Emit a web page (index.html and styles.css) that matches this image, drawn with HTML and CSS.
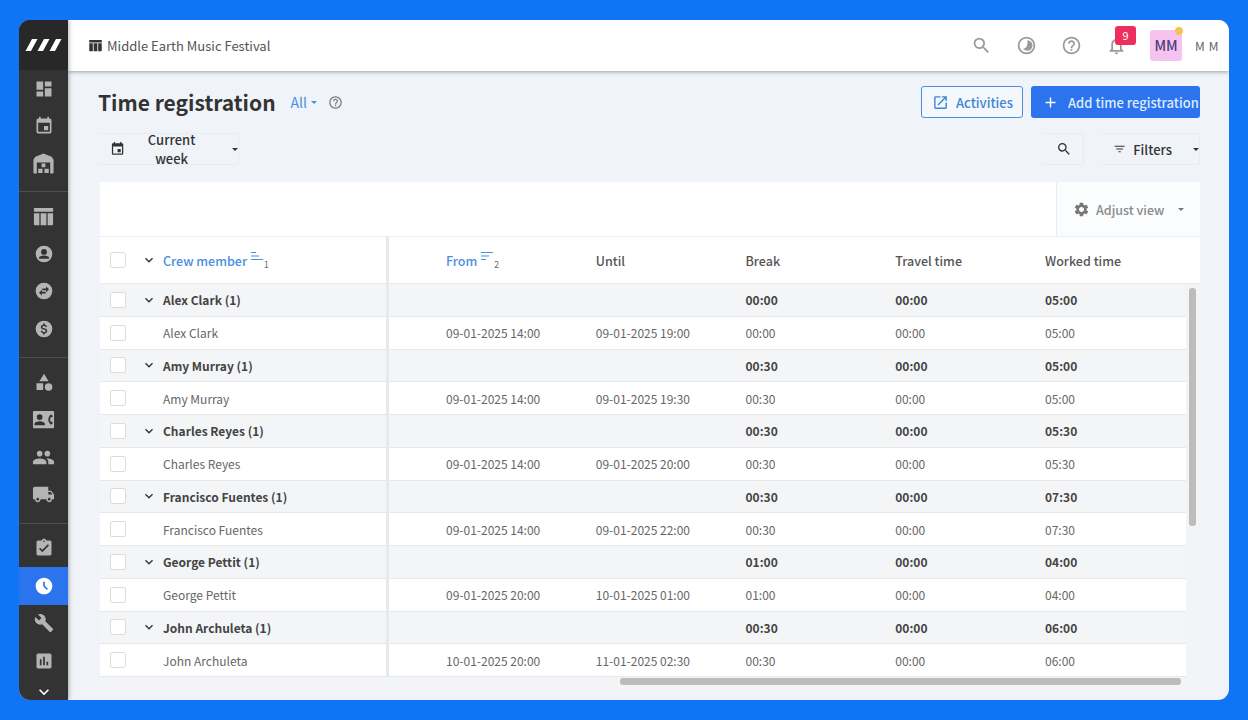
FILE: index.html
```html
<!DOCTYPE html>
<html lang="en">
<head>
<meta charset="utf-8">
<title>Time registration</title>
<link rel="stylesheet" href="styles.css">
</head>
<body>
<svg class="defs" width="0" height="0" aria-hidden="true">
  <symbol id="i-dashboard" viewBox="0 0 24 24"><path d="M3 13h8V3H3v10zm0 8h8v-6H3v6zm10 0h8V11h-8v10zm0-18v6h8V3h-8z"/></symbol>
  <symbol id="i-event" viewBox="0 0 24 24"><path d="M17 12h-5v5h5v-5zM16 1v2H8V1H6v2H5c-1.11 0-1.99.9-1.99 2L3 19c0 1.1.89 2 2 2h14c1.1 0 2-.9 2-2V5c0-1.1-.9-2-2-2h-1V1h-2zm3 18H5V8h14v11z"/></symbol>
  <symbol id="i-warehouse" viewBox="0 0 24 24"><path d="M12 1.5 3.5 5 1.5 8v13.5c0 .6.4 1 1 1H5V11h14v11.5h2.5c.6 0 1-.4 1-1V8l-2-3z"/><path d="M10 12h4v4h-4zM6.5 17.5h4.5v4.5H6.500zM13 17.500h4.500v4.500H13z"/></symbol>
  <symbol id="i-week" viewBox="0 0 24 24"><path d="M2 3h20v4H2zM2 8.500h5.700V21H3c-.6 0-1-.4-1-1zM9 8.500h6V21H9zM16.300 8.500H22V20c0 .6-.4 1-1 1h-4.700z"/></symbol>
  <symbol id="i-person" viewBox="0 0 24 24"><path fill-rule="evenodd" d="M12 2a10 10 0 1 0 0 20 10 10 0 0 0 0-20zm0 4a3.500 3.500 0 1 1 0 7 3.500 3.500 0 0 1 0-7zm0 7.800c2.900 0 6 1.200 6 2.700v1.300H6v-1.300c0-1.500 3.100-2.700 6-2.700z"/></symbol>
  <symbol id="i-swap" viewBox="0 0 24 24"><path fill-rule="evenodd" d="M12 2a10 10 0 1 0 0 20 10 10 0 0 0 0-20zM14.500 6.500 18 10l-3.500 3.500V11H10V9h4.500zM9.500 10.500V13H14v2H9.500v2.500L6 14z"/></symbol>
  <symbol id="i-dollar" viewBox="0 0 24 24"><path fill-rule="evenodd" d="M12 2a10 10 0 1 0 0 20 10 10 0 0 0 0-20zm1 3.500v1.400c1.500.3 2.500 1.300 2.600 2.800h-1.800c-.1-.9-.7-1.400-1.800-1.400-1.200 0-1.900.5-1.900 1.300 0 .7.600 1.100 2.100 1.500 2 .5 3.700 1.200 3.700 3.200 0 1.500-1.100 2.400-2.900 2.800v1.400h-2v-1.400c-1.500-.3-2.800-1.300-2.900-3h1.800c.1 1 .9 1.600 2.100 1.600 1.400 0 2-.6 2-1.300 0-.8-.5-1.200-2.300-1.700-2-.5-3.500-1.200-3.500-3.100 0-1.400 1.100-2.300 2.800-2.700V5.500z"/></symbol>
  <symbol id="i-category" viewBox="0 0 24 24"><path d="M12 2 6.500 11h11zM17.500 13.500a4.500 4.500 0 1 0 0 9 4.500 4.500 0 0 0 0-9zM3 13.500h8v8H3z"/></symbol>
  <symbol id="i-contact" viewBox="0 0 24 24"><path fill-rule="evenodd" d="M2 3h20c.6 0 1 .4 1 1v16c0 .6-.4 1-1 1H2c-.6 0-1-.4-1-1V4c0-.6.4-1 1-1zm6 3.500a3 3 0 1 0 0 6 3 3 0 0 0 0-6zM2.500 18h11v-1.200c0-2-3.700-3-5.500-3s-5.500 1-5.500 3zM20 6.500c-1.900 1.400-3 3.500-3 5.500s1.100 4.100 3 5.500l2-2-1.800-1.500h-1c-.2-.7-.2-3.300 0-4h1L22 8.500z"/></symbol>
  <symbol id="i-group" viewBox="0 0 24 24"><path d="M16 11c1.660 0 2.990-1.340 2.990-3S17.660 5 16 5c-1.660 0-3 1.340-3 3s1.340 3 3 3zm-8 0c1.660 0 2.990-1.340 2.990-3S9.660 5 8 5C6.340 5 5 6.340 5 8s1.340 3 3 3zm0 2c-2.330 0-7 1.170-7 3.500V19h14v-2.500c0-2.330-4.670-3.500-7-3.500zm8 0c-.290 0-.620.020-.970.050 1.160.840 1.970 1.970 1.970 3.450V19h6v-2.500c0-2.330-4.670-3.500-7-3.500z"/></symbol>
  <symbol id="i-truck" viewBox="0 0 24 24"><path d="M20 8h-3V4H3c-1.100 0-2 .9-2 2v11h2c0 1.660 1.340 3 3 3s3-1.340 3-3h6c0 1.660 1.340 3 3 3s3-1.340 3-3h2v-5l-3-4zM6 18.500c-.830 0-1.500-.670-1.500-1.500s.670-1.500 1.500-1.500 1.500.670 1.500 1.500-.670 1.500-1.500 1.500zm13.500-9 1.960 2.500H17V9.500h2.500zm-1.500 9c-.830 0-1.500-.670-1.500-1.500s.670-1.500 1.500-1.500 1.500.670 1.500 1.500-.670 1.500-1.500 1.500z"/></symbol>
  <symbol id="i-task" viewBox="0 0 24 24"><path d="M19 3h-4.180C14.400 1.840 13.300 1 12 1c-1.300 0-2.400.840-2.820 2H5c-1.100 0-2 .9-2 2v14c0 1.100.9 2 2 2h14c1.100 0 2-.9 2-2V5c0-1.100-.9-2-2-2zm-7 0c.550 0 1 .450 1 1s-.450 1-1 1-1-.450-1-1 .450-1 1-1zm-2 14-4-4 1.410-1.410L10 14.170l6.590-6.590L18 9l-8 8z"/></symbol>
  <symbol id="i-clock" viewBox="0 0 24 24"><path d="M11.990 2C6.470 2 2 6.480 2 12s4.470 10 9.990 10C17.520 22 22 17.520 22 12S17.520 2 11.990 2zm3.300 14.710L11 12.410V7h2v4.590l3.710 3.710-1.420 1.410z"/></symbol>
  <symbol id="i-build" viewBox="0 0 24 24"><path d="M22.700 19l-9.100-9.100c.9-2.300.4-5-1.500-6.900-2-2-5-2.400-7.400-1.300L9 6 6 9 1.600 4.700C.4 7.100.9 10.100 2.900 12.100c1.900 1.900 4.600 2.400 6.900 1.500l9.100 9.100c.4.4 1 .4 1.400 0l2.300-2.300c.5-.4.5-1.100.1-1.400z"/></symbol>
  <symbol id="i-chart" viewBox="0 0 24 24"><path d="M19 3H5c-1.100 0-2 .9-2 2v14c0 1.100.9 2 2 2h14c1.100 0 2-.9 2-2V5c0-1.100-.9-2-2-2zM9 17H7v-7h2v7zm4 0h-2V7h2v10zm4 0h-2v-4h2v4z"/></symbol>
  <symbol id="i-chev" viewBox="0 0 24 24"><path d="M7.410 8.590 12 13.170l4.590-4.580L18 10l-6 6-6-6z"/></symbol>
  <symbol id="i-search" viewBox="0 0 24 24"><path d="M15.500 14h-.790l-.280-.270A6.470 6.470 0 0 0 16 9.500 6.500 6.500 0 1 0 9.500 16c1.610 0 3.090-.590 4.230-1.570l.270.280v.790l5 4.990L20.490 19l-4.990-5zm-6 0C7.010 14 5 11.990 5 9.500S7.010 5 9.500 5 14 7.010 14 9.500 11.990 14 9.500 14z"/></symbol>
  <symbol id="i-contrast" viewBox="0 0 24 24"><path fill-rule="evenodd" d="M12 2a10 10 0 1 0 0 20 10 10 0 0 0 0-20zm0 2a8 8 0 1 1 0 16 8 8 0 0 1 0-16z"/><path d="M13 6a6 6 0 1 1-5 9.500c3.500 0 5.500-2.500 5-9.500z"/></symbol>
  <symbol id="i-help" viewBox="0 0 24 24"><path d="M11 18h2v-2h-2v2zm1-16C6.480 2 2 6.480 2 12s4.480 10 10 10 10-4.480 10-10S17.520 2 12 2zm0 18c-4.410 0-8-3.590-8-8s3.590-8 8-8 8 3.590 8 8-3.590 8-8 8zm0-14c-2.210 0-4 1.790-4 4h2c0-1.100.9-2 2-2s2 .9 2 2c0 2-3 1.750-3 5h2c0-2.250 3-2.500 3-5 0-2.210-1.790-4-4-4z"/></symbol>
  <symbol id="i-bell" viewBox="0 0 24 24"><path d="M12 22c1.100 0 2-.9 2-2h-4c0 1.100.9 2 2 2zm6-6v-5c0-3.070-1.630-5.640-4.500-6.320V4c0-.830-.670-1.500-1.500-1.500s-1.500.670-1.500 1.500v.680C7.640 5.360 6 7.920 6 11v5l-2 2v1h16v-1l-2-2zm-2 1H8v-6c0-2.480 1.510-4.500 4-4.500s4 2.020 4 4.500v6z"/></symbol>
  <symbol id="i-open" viewBox="0 0 24 24"><path d="M19 19H5V5h7V3H5a2 2 0 0 0-2 2v14a2 2 0 0 0 2 2h14c1.100 0 2-.9 2-2v-7h-2v7zM14 3v2h3.590l-9.830 9.830 1.410 1.410L19 6.410V10h2V3h-7z"/></symbol>
  <symbol id="i-plus" viewBox="0 0 24 24"><path d="M19 13h-6v6h-2v-6H5v-2h6V5h2v6h6v2z"/></symbol>
  <symbol id="i-filter" viewBox="0 0 24 24"><path d="M10 18h4v-2h-4v2zM3 6v2h18V6H3zm3 7h12v-2H6v2z"/></symbol>
  <symbol id="i-gear" viewBox="0 0 24 24"><path d="M19.140 12.940c.040-.3.060-.610.060-.940 0-.320-.020-.640-.070-.940l2.030-1.580c.180-.140.230-.410.120-.610l-1.920-3.320c-.120-.220-.370-.290-.590-.220l-2.390.960c-.5-.380-1.030-.7-1.620-.940l-.360-2.540c-.040-.240-.240-.410-.480-.410h-3.840c-.240 0-.430.170-.470.410l-.360 2.540c-.590.240-1.130.570-1.620.940l-2.390-.960c-.220-.080-.470 0-.590.220L2.740 8.870c-.120.210-.080.470.120.610l2.030 1.580c-.050.3-.090.630-.09.940s.020.640.070.940l-2.030 1.580c-.180.140-.230.410-.120.610l1.920 3.320c.120.220.370.290.590.220l2.390-.960c.5.380 1.030.7 1.620.940l.360 2.540c.050.240.240.410.480.410h3.840c.240 0 .440-.170.470-.410l.360-2.540c.590-.240 1.130-.560 1.620-.940l2.390.960c.220.080.470 0 .590-.220l1.920-3.320c.120-.220.070-.470-.120-.610l-2.010-1.580zM12 15.600c-1.980 0-3.600-1.620-3.600-3.600s1.620-3.600 3.600-3.600 3.600 1.620 3.600 3.600-1.620 3.600-3.600 3.600z"/></symbol>
  <symbol id="i-sort" viewBox="0 0 12 10"><path d="M0 0h5v1H0zM0 3.500h8v1H0zM0 7h12v1H0z"/></symbol>
  <symbol id="i-sortd" viewBox="0 0 12 10"><path d="M0 0h12v1H0zM0 3.500h8v1H0zM0 7h5v1H0z"/></symbol>
</svg>

<div class="app">
  <nav class="side">
    <div class="logo">
      <svg class="logo-mark" viewBox="0 0 37 14"><path d="M7 1h5.500L6 13H.5zM19 1h5.500L18 13h-5.500zM31 1h5.500L30 13h-5.500z"/></svg>
    </div>
    <div class="side-sec sec-a">
      <a class="nav"><svg class="ni"><use href="#i-dashboard"/></svg></a>
      <a class="nav"><svg class="ni"><use href="#i-event"/></svg></a>
      <a class="nav"><svg class="ni lg"><use href="#i-warehouse"/></svg></a>
    </div>
    <div class="side-sec">
      <a class="nav"><svg class="ni lg"><use href="#i-week"/></svg></a>
      <a class="nav"><svg class="ni"><use href="#i-person"/></svg></a>
      <a class="nav"><svg class="ni"><use href="#i-swap"/></svg></a>
      <a class="nav"><svg class="ni"><use href="#i-dollar"/></svg></a>
    </div>
    <div class="side-sec">
      <a class="nav"><svg class="ni"><use href="#i-category"/></svg></a>
      <a class="nav"><svg class="ni lg"><use href="#i-contact"/></svg></a>
      <a class="nav"><svg class="ni lg"><use href="#i-group"/></svg></a>
      <a class="nav"><svg class="ni lg"><use href="#i-truck"/></svg></a>
    </div>
    <div class="side-sec sec-z">
      <a class="nav"><svg class="ni"><use href="#i-task"/></svg></a>
      <a class="nav active"><svg class="ni"><use href="#i-clock"/></svg></a>
      <a class="nav"><svg class="ni"><use href="#i-build"/></svg></a>
      <a class="nav"><svg class="ni"><use href="#i-chart"/></svg></a>
      <a class="nav more"><svg class="ni"><use href="#i-chev"/></svg></a>
    </div>
  </nav>

  <main class="main">
    <header class="top">
      <svg class="top-ic"><use href="#i-week"/></svg>
      <span class="top-name">Middle Earth Music Festival</span>
      <div class="top-right">
        <svg class="tool"><use href="#i-search"/></svg>
        <svg class="tool"><use href="#i-contrast"/></svg>
        <svg class="tool"><use href="#i-help"/></svg>
        <span class="bell"><svg class="tool"><use href="#i-bell"/></svg><b class="badge">9</b></span>
        <span class="avatar">MM<i class="dot"></i></span>
        <span class="uname">M M</span>
      </div>
    </header>

    <section class="content">
      <div class="bar">
        <h1 class="title">Time registration</h1>
        <span class="all">All<i class="caret"></i></span>
        <svg class="help"><use href="#i-help"/></svg>
        <span class="grow"></span>
        <button class="btn btn-out"><svg class="bi"><use href="#i-open"/></svg>Activities</button>
        <button class="btn btn-main"><svg class="bi"><use href="#i-plus"/></svg>Add time registration</button>
      </div>
      <div class="bar bar2">
        <button class="flat week"><svg class="fi"><use href="#i-event"/></svg>Current week<i class="caret dark"></i></button>
        <span class="grow"></span>
        <button class="flat find"><svg class="fi"><use href="#i-search"/></svg></button>
        <button class="flat filters"><svg class="fi"><use href="#i-filter"/></svg>Filters<i class="caret dark"></i></button>
      </div>

      <div class="table">
        <div class="tbar">
          <div class="adjust"><svg class="gear"><use href="#i-gear"/></svg>Adjust view<i class="caret grey"></i></div>
        </div>
        <div class="row head">
          <div class="frozen"><i class="cb"></i><svg class="chev"><use href="#i-chev"/></svg><span class="hname">Crew member</span><svg class="sort"><use href="#i-sort"/></svg><sub class="idx">1</sub></div>
          <div class="cell first from"><span class="hname">From</span><svg class="sort"><use href="#i-sortd"/></svg><sub class="idx">2</sub></div>
          <div class="cell">Until</div><div class="cell">Break</div><div class="cell">Travel time</div><div class="cell">Worked time</div>
        </div>
        <div class="tbody">
          <div class="row grp"><div class="frozen"><i class="cb"></i><svg class="chev"><use href="#i-chev"/></svg>Alex Clark (1)</div><div class="cell first"></div><div class="cell"></div><div class="cell">00:00</div><div class="cell">00:00</div><div class="cell">05:00</div></div>
          <div class="row rec"><div class="frozen"><i class="cb"></i><span class="ind">Alex Clark</span></div><div class="cell first">09-01-2025 14:00</div><div class="cell">09-01-2025 19:00</div><div class="cell">00:00</div><div class="cell">00:00</div><div class="cell">05:00</div></div>
          <div class="row grp"><div class="frozen"><i class="cb"></i><svg class="chev"><use href="#i-chev"/></svg>Amy Murray (1)</div><div class="cell first"></div><div class="cell"></div><div class="cell">00:30</div><div class="cell">00:00</div><div class="cell">05:00</div></div>
          <div class="row rec"><div class="frozen"><i class="cb"></i><span class="ind">Amy Murray</span></div><div class="cell first">09-01-2025 14:00</div><div class="cell">09-01-2025 19:30</div><div class="cell">00:30</div><div class="cell">00:00</div><div class="cell">05:00</div></div>
          <div class="row grp"><div class="frozen"><i class="cb"></i><svg class="chev"><use href="#i-chev"/></svg>Charles Reyes (1)</div><div class="cell first"></div><div class="cell"></div><div class="cell">00:30</div><div class="cell">00:00</div><div class="cell">05:30</div></div>
          <div class="row rec"><div class="frozen"><i class="cb"></i><span class="ind">Charles Reyes</span></div><div class="cell first">09-01-2025 14:00</div><div class="cell">09-01-2025 20:00</div><div class="cell">00:30</div><div class="cell">00:00</div><div class="cell">05:30</div></div>
          <div class="row grp"><div class="frozen"><i class="cb"></i><svg class="chev"><use href="#i-chev"/></svg>Francisco Fuentes (1)</div><div class="cell first"></div><div class="cell"></div><div class="cell">00:30</div><div class="cell">00:00</div><div class="cell">07:30</div></div>
          <div class="row rec"><div class="frozen"><i class="cb"></i><span class="ind">Francisco Fuentes</span></div><div class="cell first">09-01-2025 14:00</div><div class="cell">09-01-2025 22:00</div><div class="cell">00:30</div><div class="cell">00:00</div><div class="cell">07:30</div></div>
          <div class="row grp"><div class="frozen"><i class="cb"></i><svg class="chev"><use href="#i-chev"/></svg>George Pettit (1)</div><div class="cell first"></div><div class="cell"></div><div class="cell">01:00</div><div class="cell">00:00</div><div class="cell">04:00</div></div>
          <div class="row rec"><div class="frozen"><i class="cb"></i><span class="ind">George Pettit</span></div><div class="cell first">09-01-2025 20:00</div><div class="cell">10-01-2025 01:00</div><div class="cell">01:00</div><div class="cell">00:00</div><div class="cell">04:00</div></div>
          <div class="row grp"><div class="frozen"><i class="cb"></i><svg class="chev"><use href="#i-chev"/></svg>John Archuleta (1)</div><div class="cell first"></div><div class="cell"></div><div class="cell">00:30</div><div class="cell">00:00</div><div class="cell">06:00</div></div>
          <div class="row rec"><div class="frozen"><i class="cb"></i><span class="ind">John Archuleta</span></div><div class="cell first">10-01-2025 20:00</div><div class="cell">11-01-2025 02:30</div><div class="cell">00:30</div><div class="cell">00:00</div><div class="cell">06:00</div></div>
          <div class="sb-v"></div>
          <div class="sb-h"></div>
        </div>
      </div>
    </section>
  </main>
</div>
</body>
</html>
```

FILE: styles.css
```css
* { box-sizing: border-box; }
html, body { height: 100%; }
body {
  margin: 0;
  height: 720px;
  overflow: hidden;
  padding: 20px 19px;
  background: #0f74f5;
  font-family: "Noto Sans CJK SC", "Noto Sans", sans-serif;
  color: #333;
}
.defs { position: absolute; }
.app {
  display: flex;
  width: 1210px;
  height: 680px;
  border-radius: 11px;
  overflow: hidden;
  background: #f0f4f9;
}

/* sidebar */
.side {
  flex: 0 0 49px;
  display: flex;
  flex-direction: column;
  background: #333;
  box-shadow: 1px 0 4px rgba(0,0,0,.3);
  z-index: 2;
}
.logo {
  flex: 0 0 50px;
  display: flex;
  align-items: center;
  justify-content: center;
  background: #282828;
}
.logo-mark { width: 37px; height: 14px; fill: #fff; }
.side-sec { padding: 6px 0 9px; border-bottom: 1px solid #4e4e4e; }
.sec-a { padding: 0 0 8px; }
.sec-z { border-bottom: 0; padding-bottom: 0; }
.nav {
  display: flex;
  align-items: center;
  justify-content: center;
  height: 37.5px;
}
.ni { width: 20px; height: 20px; fill: #b4b4b4; }
.ni.lg { width: 23px; height: 23px; }
.nav.active { background: #2b74ee; }
.nav.active .ni { fill: #fff; }
.nav.more { height: 24px; margin-top: 0; }
.nav.more .ni { fill: #fff; }

/* top */
.main { flex: 1; min-width: 0; display: flex; flex-direction: column; }
.top {
  flex: 0 0 51px;
  display: flex;
  align-items: center;
  padding: 0 10px 0 20px;
  background: #fff;
  box-shadow: 0 1px 4px rgba(0,0,0,.35);
  z-index: 1;
}
.top-ic { width: 15px; height: 15px; fill: #333; margin-right: 4px; }
.top-name { font-size: 13px; color: #555; }
.top-right { margin-left: auto; display: flex; align-items: center; }
.tool { width: 21px; height: 21px; fill: #9a9a9a; display: block; margin-right: 24px; }
.bell { position: relative; display: block; }
.bell .tool { margin-right: 23px; }
.badge {
  position: absolute;
  left: 9px;
  top: -9px;
  width: 21px;
  height: 19px;
  border-radius: 3px;
  background: #ee2e5d;
  color: #fff;
  font-size: 11px;
  font-weight: 400;
  line-height: 19px;
  text-align: center;
}
.avatar {
  position: relative;
  width: 32px;
  height: 31px;
  margin-right: 13px;
  background: #f6c3f0;
  color: #4a3f78;
  font-size: 14px;
  font-weight: 500;
  line-height: 31px;
  text-align: center;
  border-radius: 3px;
}
.dot {
  position: absolute;
  right: -1px;
  top: -3px;
  width: 8px;
  height: 8px;
  border-radius: 50%;
  background: #f5c34c;
}
.uname { font-size: 12px; color: #666; letter-spacing: .6px; }

/* content */
.content { flex: 1; min-height: 0; padding: 15px 29px 0 30px; display: flex; flex-direction: column; }
.bar { flex: 0 0 32px; display: flex; align-items: center; }
.bar2 { margin-top: 15px; padding-left: 1px; }
.grow { flex: 1; }
.title { margin: 0; font-size: 21px; font-weight: 700; color: #333; line-height: 32px; }
.all { margin-left: 15px; font-size: 14px; color: #4a8fdf; display: flex; align-items: center; }
.caret { display: inline-block; width: 0; height: 0; border: 3px solid transparent; border-top: 3.5px solid #4a8fdf; border-bottom: 0; margin-left: 4px; }
.caret.dark { border-top-color: #333; margin-left: 14px; }
.caret.grey { border-top-color: #777; margin-left: 14px; }
.help { width: 15px; height: 15px; fill: #777; margin-left: 11px; }
.btn {
  height: 32px;
  display: flex;
  align-items: center;
  border-radius: 3px;
  font: 500 13px "Noto Sans CJK SC", "Noto Sans", sans-serif;
  cursor: pointer;
}
.bi { width: 17px; height: 17px; }
.btn-out { width: 102px; padding: 0 0 0 10px; gap: 7px; background: #f4f8fc; border: 1px solid #4a8fdf; color: #3f84d8; }
.btn-out .bi { fill: #3f84d8; }
.btn-main { width: 169px; margin-left: 8px; padding: 0 0 0 11px; gap: 9px; background: #2b74ee; border: 0; color: #dfeafc; }
.btn-main .bi { fill: #fff; }
.flat {
  height: 32px;
  display: flex;
  align-items: center;
  background: transparent;
  border: 1px solid #e8ebf0;
  border-left-color: transparent;
  border-radius: 2px;
  font: 500 13px "Noto Sans CJK SC", "Noto Sans", sans-serif;
  color: #333;
}
.fi { width: 16px; height: 16px; fill: #333; }
.week { width: 140px; padding: 0 0 0 10px; gap: 7px; }
.find { width: 41px; justify-content: center; }
.filters { width: 100px; margin-left: 16px; padding: 0 0 0 12px; gap: 7px; }

/* table */
.table { flex: 1; min-height: 0; margin: 17px 0 12px 2px; display: flex; flex-direction: column; background: #f3f4f6; }
.tbar { flex: 0 0 55px; display: flex; justify-content: flex-end; background: #fff; border-bottom: 1px solid #eceef1; }
.adjust {
  width: 144px;
  display: flex;
  align-items: center;
  padding-left: 16px;
  border-left: 1px solid #e9ebee;
  background: #fbfcfd;
  font-size: 12.5px;
  font-weight: 500;
  color: #8a8a8a;
}
.gear { width: 17px; height: 17px; fill: #777; margin-right: 6px; }
.row {
  display: grid;
  grid-template-columns: 289px 57px repeat(5, 149.75px);
  align-items: stretch;
  font-size: 12px;
  color: #666;
}
.cell { display: flex; align-items: center; }
.first { grid-column: 3; }
.frozen { display: flex; align-items: center; padding-left: 10px; border-right: 3px solid #e8e9ec; background: inherit; }
.cb { flex: 0 0 16px; width: 16px; height: 16px; border: 1px solid #dcdcdc; border-radius: 2px; background: #fff; margin-right: 15px; }
.chev { flex: 0 0 16px; width: 16px; height: 16px; fill: #333; margin-right: 6px; }
.ind { margin-left: 22px; }
.head { height: 47px; background: #fff; border-bottom: 1px solid #e8eaed; font-size: 12.5px; font-weight: 500; color: #555; }
.hname { color: #4a8fdf; }
.sort { width: 12px; height: 10px; fill: #4a8fdf; margin: -6px 0 0 4px; }
.idx { font-size: 8.5px; color: #666; margin: 7px 0 0 1px; font-weight: 400; }
.tbody { position: relative; flex: 1; min-height: 0; overflow: hidden; }
.grp, .rec { height: 32.75px; width: 1086px; border-bottom: 1px solid #e6e8eb; }
.grp { background: #f4f5f7; color: #444; font-weight: 700; }
.rec { background: #fff; }
.sb-v { position: absolute; left: 1089px; top: 4px; width: 7px; height: 238px; background: #bcbcbc; border-radius: 3px; }
.sb-h { position: absolute; left: 520px; top: 394px; width: 561px; height: 7px; background: #bcbcbc; border-radius: 3px; }
```
